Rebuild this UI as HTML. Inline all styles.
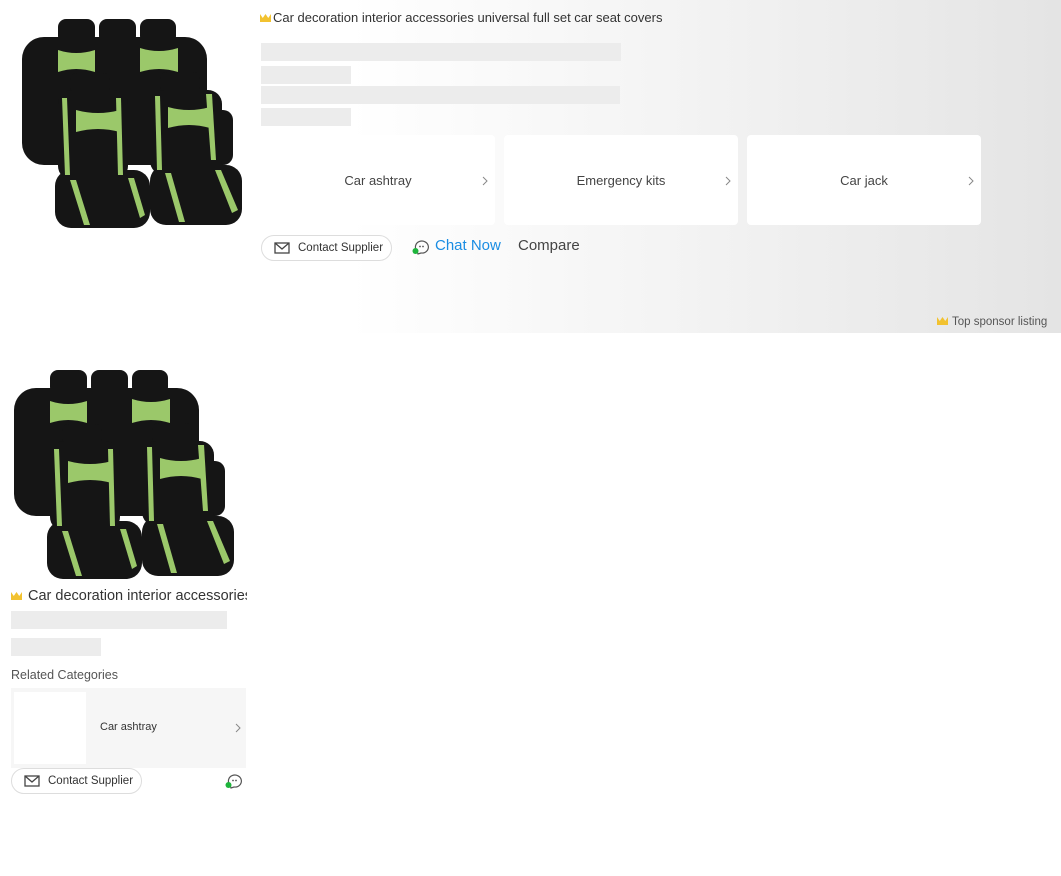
<!DOCTYPE html>
<html><head><meta charset="utf-8"><style>
*{margin:0;padding:0;box-sizing:border-box}
body{width:1061px;height:876px;background:#fff;font-family:"Liberation Sans",sans-serif;color:#333;position:relative;overflow:hidden}
.abs{position:absolute}
.banner{left:0;top:0;width:1061px;height:333px;background:linear-gradient(90deg,#fff 0%,#fff 33%,#f3f3f3 65%,#e4e4e4 100%)}
.sk{position:absolute;background:#ececec}
.card{position:absolute;top:135px;width:234px;height:90px;background:#fff;border-radius:4px;font-size:13px;color:#444;display:flex;align-items:center}
.card span{flex:1;text-align:center}
.arr{position:absolute;right:7px;top:41px}
.btn{position:absolute;border:1px solid #ddd;border-radius:14px;background:#fff;font-size:11.5px;color:#333;display:flex;align-items:center;gap:8px;padding-left:12px}
.crown{display:inline-block;width:11px;height:8px;background:#f2c230;clip-path:polygon(0 0,25% 50%,50% 0,75% 50%,100% 0,100% 100%,0 100%)}
</style></head><body>
<div class="abs banner"></div>

<svg class="abs" style="left:10px;top:10px" width="240" height="225" viewBox="0 0 240 225">
<g fill="#151515">
<rect x="48" y="9" width="37" height="25" rx="8"/><rect x="89" y="9" width="37" height="25" rx="8"/><rect x="130" y="9" width="36" height="25" rx="8"/>
<rect x="12" y="27" width="185" height="128" rx="22"/>
<rect x="195" y="100" width="28" height="55" rx="10"/>
<rect x="60" y="63" width="40" height="22" rx="7"/><rect x="150" y="62" width="40" height="22" rx="7"/>
<rect x="48" y="80" width="70" height="90" rx="14"/><rect x="140" y="80" width="72" height="85" rx="14"/>
<rect x="45" y="160" width="95" height="58" rx="16"/><rect x="140" y="155" width="92" height="60" rx="16"/>
</g>
<g fill="#9bc86a">
<path d="M48 40 Q66 46 85 40 L85 62 Q66 56 48 62Z"/><path d="M130 38 Q149 44 168 38 L168 62 Q149 56 130 62Z"/>
<path d="M66 100 Q88 106 110 100 L110 122 Q88 116 66 122Z"/><path d="M158 97 Q179 103 200 97 L200 118 Q179 112 158 118Z"/>
<path d="M52 88 L57 88 L60 165 L55 165Z"/><path d="M106 88 L111 88 L113 165 L108 165Z"/>
<path d="M145 86 L150 86 L152 160 L147 160Z"/><path d="M196 84 L202 84 L206 150 L201 150Z"/>
<path d="M60 170 L66 170 L80 215 L74 215Z"/><path d="M118 168 L124 168 L135 205 L130 208Z"/>
<path d="M155 163 L161 163 L175 212 L169 212Z"/><path d="M205 160 L211 160 L228 200 L222 203Z"/>
</g>
</svg>

<div class="abs" style="left:260px;top:10px;font-size:13px;color:#333"><span class="crown" style="margin-right:2px"></span>Car decoration interior accessories universal full set car seat covers</div>
<div class="sk" style="left:261px;top:43px;width:360px;height:18px"></div>
<div class="sk" style="left:261px;top:66px;width:90px;height:18px"></div>
<div class="sk" style="left:261px;top:86px;width:359px;height:18px"></div>
<div class="sk" style="left:261px;top:108px;width:90px;height:18px"></div>

<div class="card" style="left:261px"><span>Car ashtray</span><svg class="arr" width="6" height="10" viewBox="0 0 6 10"><path d="M1 1 L5 5 L1 9" fill="none" stroke="#888" stroke-width="1"/></svg></div>
<div class="card" style="left:504px"><span>Emergency kits</span><svg class="arr" width="6" height="10" viewBox="0 0 6 10"><path d="M1 1 L5 5 L1 9" fill="none" stroke="#888" stroke-width="1"/></svg></div>
<div class="card" style="left:747px"><span>Car jack</span><svg class="arr" width="6" height="10" viewBox="0 0 6 10"><path d="M1 1 L5 5 L1 9" fill="none" stroke="#888" stroke-width="1"/></svg></div>

<div class="btn" style="left:261px;top:235px;width:131px;height:26px">
<svg width="16" height="12" viewBox="0 0 16 12"><rect x="1" y="1" width="14" height="10" fill="none" stroke="#444" stroke-width="1.3"/><path d="M1 1 L8 7 L15 1" fill="none" stroke="#444" stroke-width="1.3"/></svg>Contact Supplier</div>
<svg class="abs" style="left:412px;top:239px" width="18" height="16" viewBox="0 0 18 16"><path d="M5 12 A6.5 6 0 1 1 9 14 L6 15 Z" fill="none" stroke="#555" stroke-width="1.2"/><circle cx="8" cy="7.5" r="0.9" fill="#555"/><circle cx="11" cy="7.5" r="0.9" fill="#555"/><circle cx="3.5" cy="12" r="3" fill="#1db43b"/></svg>
<div class="abs" style="left:435px;top:237px;font-size:15px;color:#1a8de3">Chat Now</div>
<div class="abs" style="left:518px;top:237px;font-size:15px;color:#444">Compare</div>
<div class="abs" style="left:937px;top:316px;font-size:11.5px;color:#555"><span class="crown" style="margin-right:4px"></span>Top sponsor listing</div>

<svg class="abs" style="left:2px;top:361px" width="240" height="225" viewBox="0 0 240 225">
<g fill="#151515">
<rect x="48" y="9" width="37" height="25" rx="8"/><rect x="89" y="9" width="37" height="25" rx="8"/><rect x="130" y="9" width="36" height="25" rx="8"/>
<rect x="12" y="27" width="185" height="128" rx="22"/>
<rect x="195" y="100" width="28" height="55" rx="10"/>
<rect x="60" y="63" width="40" height="22" rx="7"/><rect x="150" y="62" width="40" height="22" rx="7"/>
<rect x="48" y="80" width="70" height="90" rx="14"/><rect x="140" y="80" width="72" height="85" rx="14"/>
<rect x="45" y="160" width="95" height="58" rx="16"/><rect x="140" y="155" width="92" height="60" rx="16"/>
</g>
<g fill="#9bc86a">
<path d="M48 40 Q66 46 85 40 L85 62 Q66 56 48 62Z"/><path d="M130 38 Q149 44 168 38 L168 62 Q149 56 130 62Z"/>
<path d="M66 100 Q88 106 110 100 L110 122 Q88 116 66 122Z"/><path d="M158 97 Q179 103 200 97 L200 118 Q179 112 158 118Z"/>
<path d="M52 88 L57 88 L60 165 L55 165Z"/><path d="M106 88 L111 88 L113 165 L108 165Z"/>
<path d="M145 86 L150 86 L152 160 L147 160Z"/><path d="M196 84 L202 84 L206 150 L201 150Z"/>
<path d="M60 170 L66 170 L80 215 L74 215Z"/><path d="M118 168 L124 168 L135 205 L130 208Z"/>
<path d="M155 163 L161 163 L175 212 L169 212Z"/><path d="M205 160 L211 160 L228 200 L222 203Z"/>
</g>
</svg>

<div class="abs" style="left:11px;top:588px;width:236px;white-space:nowrap;overflow:hidden;font-size:14.5px;color:#333"><span class="crown" style="margin-right:6px"></span>Car decoration interior accessories universal</div>
<div class="sk" style="left:11px;top:611px;width:216px;height:18px"></div>
<div class="sk" style="left:11px;top:638px;width:90px;height:18px"></div>
<div class="abs" style="left:11px;top:668px;font-size:12.5px;color:#555">Related Categories</div>
<div class="abs" style="left:11px;top:688px;width:235px;height:80px;background:#f6f6f6"></div>
<div class="abs" style="left:14px;top:692px;width:72px;height:72px;background:#fff"></div>
<div class="abs" style="left:100px;top:721px;font-size:11px;color:#333">Car ashtray</div>
<svg class="abs" style="left:235px;top:723px" width="6" height="10" viewBox="0 0 6 10"><path d="M1 1 L5 5 L1 9" fill="none" stroke="#888" stroke-width="1"/></svg>
<div class="btn" style="left:11px;top:768px;width:131px;height:26px">
<svg width="16" height="12" viewBox="0 0 16 12"><rect x="1" y="1" width="14" height="10" fill="none" stroke="#444" stroke-width="1.3"/><path d="M1 1 L8 7 L15 1" fill="none" stroke="#444" stroke-width="1.3"/></svg>Contact Supplier</div>
<svg class="abs" style="left:225px;top:773px" width="18" height="16" viewBox="0 0 18 16"><path d="M5 12 A6.5 6 0 1 1 9 14 L6 15 Z" fill="none" stroke="#555" stroke-width="1.2"/><circle cx="8" cy="7.5" r="0.9" fill="#555"/><circle cx="11" cy="7.5" r="0.9" fill="#555"/><circle cx="3.5" cy="12" r="3" fill="#1db43b"/></svg>
</body></html>
